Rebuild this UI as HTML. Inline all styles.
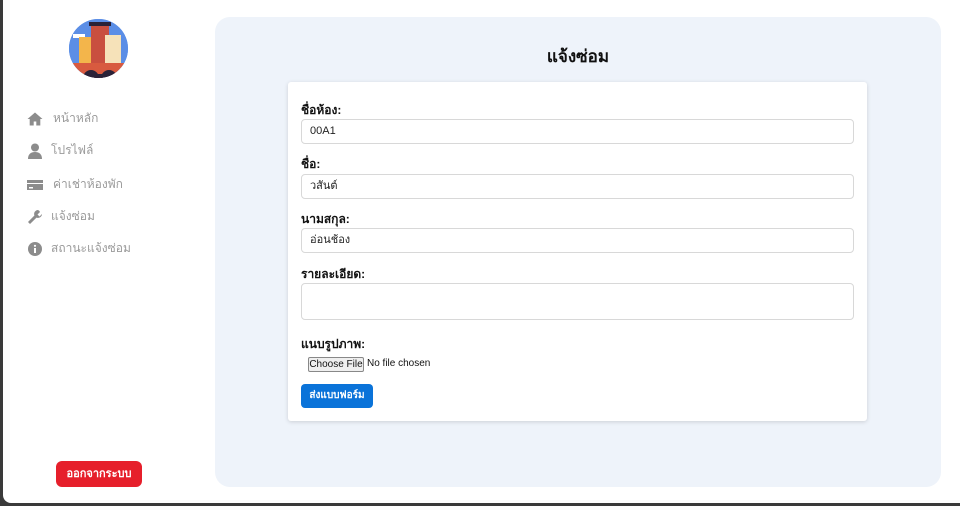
<!DOCTYPE html>
<html><head><meta charset="utf-8"><style>
*{box-sizing:border-box;margin:0;padding:0}
body{width:960px;height:506px;background:#3a3a3a;font-family:"Liberation Sans","Noto Sans CJK SC",sans-serif;position:relative;overflow:hidden}
.win{position:absolute;left:3px;top:0;width:957px;height:503px;background:#fff;border-radius:0 0 0 8px}
.logo{position:absolute;left:69px;top:19px;width:59px;height:59px;border-radius:50%;overflow:hidden;background:#5b8ee6}
.nav{position:absolute;left:27px;font-size:12px;color:#9a9a9a;display:flex;align-items:center}
.nav svg{width:16px;height:16px;fill:#8c8c8c;margin-right:8px}
.logout{position:absolute;left:56px;top:461px;width:86px;height:26px;background:#e61f2b;border-radius:6px;color:#fff;font-size:11px;font-weight:bold;text-align:center;line-height:26px}
.main{position:absolute;left:215px;top:17px;width:726px;height:470px;background:#eef3fa;border-radius:15px}
h1{position:absolute;width:780px;top:43px;text-align:center;font-size:17px;font-weight:bold;color:#111}
.card{position:absolute;left:288px;top:82px;width:579px;height:339px;background:#fff;border-radius:3px;box-shadow:0 1px 4px rgba(0,0,0,.15)}
.lbl{position:absolute;left:301px;font-size:12px;font-weight:bold;color:#111}
.inp{position:absolute;left:301px;width:553px;height:25px;border:1px solid #d8d8d8;border-radius:4px;font-size:11px;padding-left:8px;line-height:23px;color:#222}
.fb{position:absolute;left:308px;top:357px;width:56px;height:15px;border:1px solid #888;background:#efefef;border-radius:2px;font-size:10px;text-align:center;line-height:13px;color:#111;white-space:nowrap;overflow:hidden}
.send{position:absolute;left:301px;top:384px;width:72px;height:24px;background:#0a73d9;border-radius:4px;color:#fff;font-size:10px;font-weight:bold;text-align:center;line-height:24px}
</style></head><body>
<div class="win"></div>
<div class="logo"><svg width="59" height="59" viewBox="0 0 59 59">
<rect width="59" height="59" fill="#5b8ee6"/><rect x="4" y="15" width="12" height="4" fill="#fff"/>
<rect x="10" y="18" width="18" height="32" fill="#f3b54b"/><rect x="22" y="6" width="18" height="44" fill="#c94f3f"/>
<rect x="36" y="16" width="16" height="34" fill="#f6e2b9"/><rect x="20" y="3" width="22" height="4" fill="#2a2238"/>
<rect x="0" y="44" width="59" height="15" fill="#d85a3f"/><path d="M14 59a8 8 0 0 1 16 0M32 59a8 8 0 0 1 16 0" fill="#2a2238"/>
<rect x="0" y="55" width="59" height="4" fill="#2a2238"/></svg></div>
<div class="nav" style="top:109px"><svg viewBox="0 0 16 16"><path d="M8 1.5L0.5 8h2.2v6.5h4v-4h2.6v4h4V8h2.2z"/></svg><span style="margin-left:2px">หน้าหลัก</span></div>
<div class="nav" style="top:141px"><svg viewBox="0 0 16 16"><circle cx="8" cy="4.5" r="4"/><path d="M1 16c0-5 3-7 7-7s7 2 7 7z"/></svg>โปรไฟล์</div>
<div class="nav" style="top:175px"><svg viewBox="0 0 16 16"><path d="M0 3h16v3H0zM0 7h16v6H0z"/><rect x="2" y="10" width="4" height="1.5" fill="#fff"/></svg><span style="margin-left:2px">ค่าเช่าห้องพัก</span></div>
<div class="nav" style="top:207px"><svg viewBox="0 0 16 16"><path d="M11 1a4 4 0 0 0-3.6 5.5L1 13l2 2 6.5-6.4A4 4 0 0 0 15 5l-2.5 2.5-2-2L13 3a4 4 0 0 0-2-2z"/></svg>แจ้งซ่อม</div>
<div class="nav" style="top:239px"><svg viewBox="0 0 16 16"><circle cx="8" cy="8" r="7"/><rect x="7" y="7" width="2" height="5" fill="#fff"/><circle cx="8" cy="4.8" r="1.1" fill="#fff"/></svg>สถานะแจ้งซ่อม</div>
<div class="logout">ออกจากระบบ</div>
<div class="main"></div>
<h1 style="left:188px">แจ้งซ่อม</h1>
<div class="card"></div>
<div class="lbl" style="top:101px">ชื่อห้อง:</div>
<div class="inp" style="top:119px">00A1</div>
<div class="lbl" style="top:155px">ชื่อ:</div>
<div class="inp" style="top:174px">วสันต์</div>
<div class="lbl" style="top:210px">นามสกุล:</div>
<div class="inp" style="top:228px">อ่อนช้อง</div>
<div class="lbl" style="top:265px">รายละเอียด:</div>
<div class="inp" style="top:283px;height:37px"></div>
<div class="lbl" style="top:335px">แนบรูปภาพ:</div>
<div class="fb">Choose File</div>
<div style="position:absolute;left:367px;top:358px;font-size:10px;color:#111">No file chosen</div>
<div class="send">ส่งแบบฟอร์ม</div>
</body></html>
